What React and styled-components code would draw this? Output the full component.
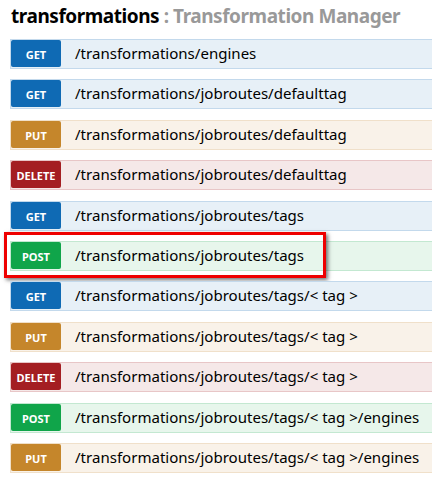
import React from 'react';
import styled, { createGlobalStyle } from 'styled-components';

const GlobalStyle = createGlobalStyle`
  body {
    margin: 0;
    background: #fff;
    font-family: "Noto Sans", "Open Sans", "DejaVu Sans", sans-serif;
    overflow: hidden;
  }
`;

const colors = {
  GET: { badge: '#0f6ab4', bg: '#e7f0f7', border: '#c3d9ec' },
  POST: { badge: '#10a54a', bg: '#e7f6ec', border: '#c3e8d1' },
  PUT: { badge: '#c5862b', bg: '#f9f2e9', border: '#f0e0ca' },
  DELETE: { badge: '#a41e22', bg: '#f5e8e8', border: '#e8c6c7' }
};

const Page = styled.div`
  width: 432px;
  height: 478px;
  padding: 3px 0 0 10px;
  box-sizing: border-box;
`;

const Heading = styled.h2`
  margin: 0 0 9px 1px;
  font-size: 19px;
  letter-spacing: -0.45px;
  font-weight: 700;
  line-height: 27px;
  color: #000;
  white-space: nowrap;
`;

const Sub = styled.span`
  color: #999;
`;

const List = styled.div`
  display: flex;
  flex-direction: column;
  gap: 10.4px;
`;

const Row = styled.div`
  position: relative;
  display: flex;
  align-items: flex-start;
  width: 440px;
  height: 28px;
  border: 1px solid ${p => colors[p.method].border};
  border-right: none;
  background: ${p => colors[p.method].bg};
`;

const Badge = styled.span`
  flex: none;
  width: 50px;
  height: 27px;
  border-radius: 2px;
  background: ${p => colors[p.method].badge};
  color: #fff;
  font-size: 11px;
  font-weight: 700;
  display: flex;
  align-items: center;
  justify-content: center;
  padding-top: 2px;
  box-sizing: border-box;
`;

const Path = styled.span`
  margin-left: 14px;
  font-size: 15.05px;
  line-height: 27px;
  color: #000;
  white-space: nowrap;
`;

const Highlight = styled.div`
  position: absolute;
  left: -7px;
  top: -10px;
  width: 322px;
  height: 46px;
  border: 3px solid #ee0000;
  box-sizing: border-box;
  box-shadow: 2px 2px 4px rgba(0, 0, 0, 0.55);
  pointer-events: none;
`;

const ops = [
  ['GET', '/transformations/engines'],
  ['GET', '/transformations/jobroutes/defaulttag'],
  ['PUT', '/transformations/jobroutes/defaulttag'],
  ['DELETE', '/transformations/jobroutes/defaulttag'],
  ['GET', '/transformations/jobroutes/tags'],
  ['POST', '/transformations/jobroutes/tags', true],
  ['GET', '/transformations/jobroutes/tags/< tag >'],
  ['PUT', '/transformations/jobroutes/tags/< tag >'],
  ['DELETE', '/transformations/jobroutes/tags/< tag >'],
  ['POST', '/transformations/jobroutes/tags/< tag >/engines'],
  ['PUT', '/transformations/jobroutes/tags/< tag >/engines']
];

export default function App() {
  return (
    <Page>
      <GlobalStyle />
      <Heading>
        transformations <Sub>: Transformation Manager</Sub>
      </Heading>
      <List>
        {ops.map(([method, path, marked], i) => (
          <Row key={i} method={method}>
            <Badge method={method}>{method}</Badge>
            <Path>{path}</Path>
            {marked && <Highlight />}
          </Row>
        ))}
      </List>
    </Page>
  );
}
